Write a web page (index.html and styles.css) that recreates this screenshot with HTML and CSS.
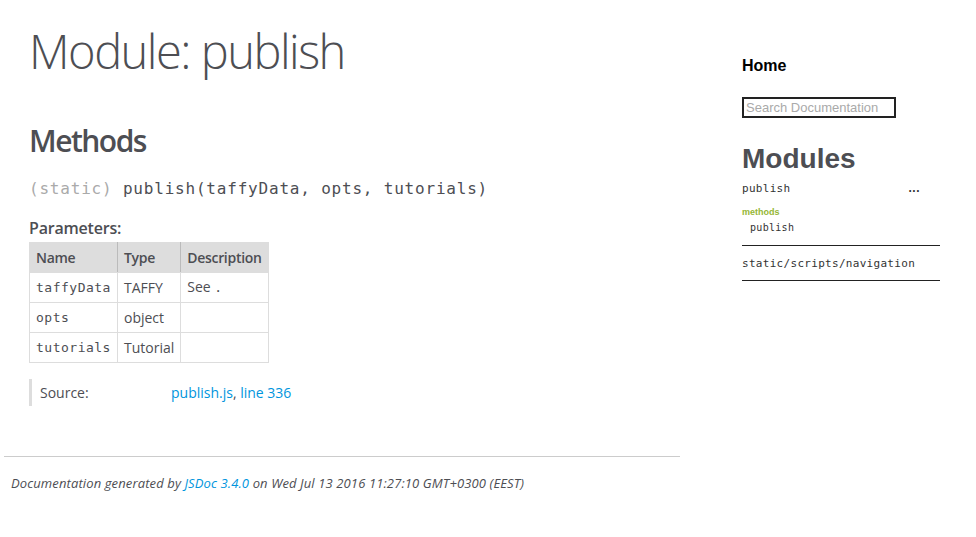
FILE: index.html
```html
<!DOCTYPE html>
<html>
<head>
<meta charset="utf-8">
<title>Module: publish</title>
<link rel="stylesheet" href="styles.css">
</head>
<body>
<div class="page">
  <div class="main">
    <div class="content">
      <h1 class="page-title">Module: publish</h1>
      <h3 class="subsection-title">Methods</h3>
      <h4 class="name"><span class="type-signature">(static) </span>publish(taffyData, opts, tutorials)</h4>
      <h5 class="params-title">Parameters:</h5>
      <table class="params">
        <thead>
          <tr><th class="c-name">Name</th><th class="c-type">Type</th><th class="c-desc">Description</th></tr>
        </thead>
        <tbody>
          <tr><td class="code">taffyData</td><td>TAFFY</td><td>See <code class="code-inline">.</code></td></tr>
          <tr><td class="code">opts</td><td>object</td><td></td></tr>
          <tr><td class="code">tutorials</td><td>Tutorial</td><td></td></tr>
        </tbody>
      </table>
      <dl class="details">
        <dt class="tag-source">Source:</dt>
        <dd class="tag-source"><a href="#">publish.js</a>, <a href="#">line 336</a></dd>
      </dl>
    </div>
    <footer class="footer">
      Documentation generated by <a href="#">JSDoc 3.4.0</a> on Wed Jul 13 2016 11:27:10 GMT+0300 (EEST)
    </footer>
  </div>
  <nav class="nav">
    <h2 class="nav-home"><a href="#">Home</a></h2>
    <input class="search" type="text" placeholder="Search Documentation">
    <h3 class="nav-title">Modules</h3>
    <ul class="nav-list">
      <li class="nav-item">
        <div class="nav-item-row"><a href="#">publish</a><span class="dots">...</span></div>
        <div class="methods-label">methods</div>
        <div class="method"><a href="#">publish</a></div>
      </li>
      <li class="nav-item nav-item-plain">
        <a href="#">static/scripts/navigation</a>
      </li>
    </ul>
  </nav>
</div>
</body>
</html>
```

FILE: styles.css
```css
html, body {
  margin: 0;
  padding: 0;
  background: #fff;
}
body {
  font-family: "Open Sans", sans-serif;
  color: #4d4e53;
}
a {
  color: #0095dd;
  text-decoration: none;
}
.page {
  display: flex;
  align-items: flex-start;
}
.main {
  width: 680px;
  flex: none;
}
.content {
  padding: 0 0 0 29px;
}
.page-title {
  font-family: "Open Sans", sans-serif;
  font-weight: 300;
  font-size: 47px;
  line-height: 56px;
  letter-spacing: -1.5px;
  margin: 23px 0 0 0;
  color: #4d4e53;
}
.subsection-title {
  font-size: 30px;
  font-weight: 600;
  line-height: 40px;
  letter-spacing: -1.5px;
  margin: 42px 0 0 0;
}
.name {
  font-family: "DejaVu Sans Mono", monospace;
  font-size: 16px;
  font-weight: 400;
  line-height: 24px;
  letter-spacing: 0.8px;
  margin: 16px 0 0 0;
  color: #4d4e53;
}
.type-signature {
  color: #aaa;
}
.params-title {
  font-size: 16px;
  font-weight: 600;
  line-height: 20px;
  letter-spacing: -0.2px;
  margin: 17px 0 0 0;
}
.params {
  border-collapse: collapse;
  margin-top: 4px;
  font-size: 14px;
}
.params th, .params td {
  border: 1px solid #ddd;
  padding: 0 6px;
  height: 29px;
  text-align: left;
  vertical-align: middle;
  line-height: 18px;
}
.params th {
  background: #ddd;
  font-weight: 600;
  letter-spacing: -0.3px;
  border-right-color: #bbb;
}
.params th:last-child {
  border-right-color: #ddd;
}
.c-name { width: 74px; }
.c-type { width: 50px; }
.c-desc { width: 72px; }
.code, .code-inline {
  font-family: "DejaVu Sans Mono", monospace;
  font-size: 13px;
  letter-spacing: 0.5px;
}
.details {
  display: flex;
  margin: 16px 0 0 0;
  border-left: 3px solid #ddd;
  padding: 4px 0 4px 8px;
  font-size: 14px;
  line-height: 19px;
}
.details dt {
  width: 131px;
  margin: 0;
}
.details dd {
  margin: 0;
}
.footer {
  margin: 50px 0 0 4px;
  border-top: 1px solid #ccc;
  padding: 16px 0 0 7px;
  font-size: 13px;
  font-style: italic;
  line-height: 20px;
  letter-spacing: 0.12px;
  color: #4d4e53;
}
.nav {
  margin-left: 62px;
  width: 198px;
  flex: none;
  font-family: "Liberation Sans", Arial, sans-serif;
}
.nav-home {
  margin: 55px 0 0 0;
  font-size: 16px;
  font-weight: 700;
  line-height: 22px;
}
.nav-home a {
  color: #000;
}
.search {
  display: block;
  box-sizing: border-box;
  width: 154px;
  height: 21px;
  margin: 20px 0 0 0;
  border: 2px solid #222;
  padding: 0 2px;
  font-family: "Liberation Sans", Arial, sans-serif;
  font-size: 13px;
  color: #333;
  outline: none;
}
.search::placeholder {
  color: #aaa;
}
.nav-title {
  margin: 25px 0 0 0;
  font-size: 28px;
  font-weight: 700;
  line-height: 32px;
  color: #4d4e53;
}
.nav-list {
  list-style: none;
  margin: 6px 0 0 0;
  padding: 0;
}
.nav-item {
  border-bottom: 1px solid #222;
  padding-bottom: 10px;
}
.nav-item a {
  font-family: "DejaVu Sans Mono", monospace;
  font-size: 11px;
  color: #333;
  letter-spacing: 0.3px;
}
.nav-item-row {
  display: flex;
  justify-content: space-between;
  align-items: baseline;
  line-height: 14px;
  padding-right: 20px;
}
.dots {
  font-size: 12px;
  font-weight: 700;
  color: #333;
  letter-spacing: 0.5px;
}
.methods-label {
  margin-top: 10px;
  font-size: 9px;
  font-weight: 700;
  color: #95b635;
  line-height: 12px;
}
.method {
  padding-left: 8px;
  margin-top: 1px;
  line-height: 14px;
}
.method a {
  font-size: 10px;
}
.nav-item-plain {
  padding: 9px 0 9px 0;
  line-height: 14px;
}
```
